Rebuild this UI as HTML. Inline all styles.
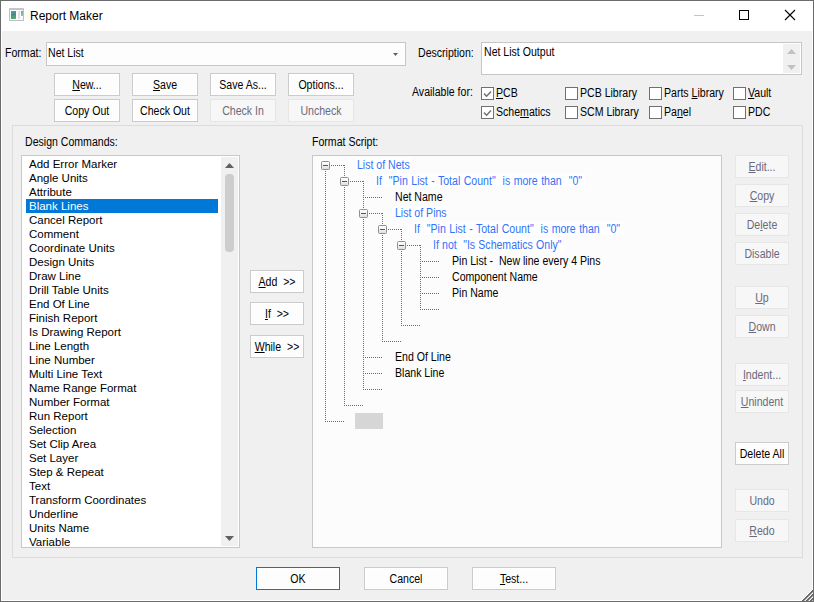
<!DOCTYPE html>
<html><head><meta charset="utf-8">
<style>
*{box-sizing:border-box;margin:0;padding:0}
html,body{width:814px;height:602px;overflow:hidden;background:#f0f0f0}
body{position:relative;font-family:"Liberation Sans",sans-serif;font-size:12px;color:#000}
.a{position:absolute}
.t{position:absolute;white-space:pre;font-size:12px;letter-spacing:0;line-height:14px;transform:scaleX(0.88);transform-origin:0 0}
.frame{left:0;top:0;width:814px;height:602px;border:1px solid #6b6b6b}
.inner{left:1px;top:31px;width:812px;height:570px;border-left:1px solid #fff;border-right:1px solid #fff;border-bottom:1px solid #fff}
.title{left:1px;top:1px;width:812px;height:30px;background:#fff}
.btn{position:absolute;background:#fdfdfd;border:1px solid #cbcbcb;box-shadow:inset 0 0 0 1px #fff;font-size:12px;letter-spacing:0;text-align:center;white-space:pre;color:#000}
.btn.dis{background:#f7f7f7;border-color:#e6e6e6;box-shadow:none;color:#6a6a7c}
.btn span{position:absolute;left:-20px;right:-20px;text-align:center;transform:scaleX(0.88)}
u{text-decoration:underline;text-underline-offset:1px}
.cb{position:absolute;width:13px;height:13px;border:1px solid #707070;background:#fff}
.lst{position:absolute;font-size:11.5px;letter-spacing:0px;white-space:pre;left:29px;line-height:14px}
.dot{position:absolute}
</style></head><body>
<div class="a title"></div>
<div class="a frame"></div>
<div class="a inner"></div>

<!-- title icon -->
<div class="a" style="left:9px;top:8px;width:15px;height:13px;border:1px solid #bcc0c6;border-top:2px solid #c2c6cc;background:#fafafa;border-radius:1px"></div>
<div class="a" style="left:11px;top:11px;width:5px;height:8px;background:linear-gradient(160deg,#6f8fc6,#3f8f86 45%,#55b664)"></div>
<div class="a" style="left:18px;top:11px;width:2px;height:8px;background:#e2e2e2"></div>
<div class="a" style="left:21px;top:11px;width:2px;height:5px;background:linear-gradient(#7898cc,#8fd07a)"></div>
<div class="t" style="left:30px;top:9px;transform:none">Report Maker</div>
<div class="a" style="left:694px;top:15px;width:10px;height:1px;background:#c4c4c4"></div>
<div class="a" style="left:739px;top:10px;width:10px;height:10px;border:1px solid #000"></div>
<svg class="a" style="left:784px;top:9px" width="12" height="12" viewBox="0 0 12 12"><path d="M1 1L11 11M11 1L1 11" stroke="#000" stroke-width="1.1"/></svg>

<!-- format row -->
<div class="t" style="left:5px;top:46px">Format:</div>
<div class="a" style="left:46px;top:42px;width:360px;height:24px;border:1px solid #c6c6c6;background:#fdfdfd"></div>
<div class="t" style="left:48px;top:46px">Net List</div>
<svg class="a" style="left:393px;top:53px" width="5" height="3" viewBox="0 0 5 3"><path d="M0 0H5L2.5 3Z" fill="#606060"/></svg>

<div class="t" style="left:418px;top:46px">Description:</div>
<div class="a" style="left:481px;top:42px;width:321px;height:33px;border:1px solid #c6c6c6;background:#fff"></div>
<div class="t" style="left:484px;top:45px">Net List Output</div>
<div class="a" style="left:783px;top:44px;width:17px;height:29px;background:#f0f0f0"></div>
<svg class="a" style="left:787px;top:49px" width="9" height="5" viewBox="0 0 9 5"><path d="M0 5H9L4.5 0Z" fill="#c2c2c2"/></svg>
<svg class="a" style="left:787px;top:65px" width="9" height="5" viewBox="0 0 9 5"><path d="M0 0H9L4.5 5Z" fill="#c2c2c2"/></svg>

<!-- button rows -->
<div class="btn" style="left:54px;top:73px;width:66px;height:23px"><span style="top:4px"><u>N</u>ew...</span></div>
<div class="btn" style="left:132px;top:73px;width:66px;height:23px"><span style="top:4px"><u>S</u>ave</span></div>
<div class="btn" style="left:210px;top:73px;width:66px;height:23px"><span style="top:4px">Save As...</span></div>
<div class="btn" style="left:288px;top:73px;width:66px;height:23px"><span style="top:4px">Options...</span></div>
<div class="btn" style="left:54px;top:99px;width:66px;height:23px"><span style="top:4px">Copy Out</span></div>
<div class="btn" style="left:132px;top:99px;width:66px;height:23px"><span style="top:4px">Check Out</span></div>
<div class="btn dis" style="left:210px;top:99px;width:66px;height:23px"><span style="top:4px">Check In</span></div>
<div class="btn dis" style="left:288px;top:99px;width:66px;height:23px"><span style="top:4px">Uncheck</span></div>

<!-- available for -->
<div class="t" style="left:412px;top:85px">Available for:</div>
<div class="cb" style="left:481px;top:87px"></div>
<div class="cb" style="left:481px;top:106px"></div>
<div class="cb" style="left:565px;top:87px"></div>
<div class="cb" style="left:565px;top:106px"></div>
<div class="cb" style="left:649px;top:87px"></div>
<div class="cb" style="left:649px;top:106px"></div>
<div class="cb" style="left:733px;top:87px"></div>
<div class="cb" style="left:733px;top:106px"></div>
<svg class="a" style="left:481px;top:87px" width="13" height="13" viewBox="0 0 13 13"><path d="M3 6.6L5.6 9.2L10 4.4" stroke="#737373" stroke-width="1.5" fill="none"/></svg>
<svg class="a" style="left:481px;top:106px" width="13" height="13" viewBox="0 0 13 13"><path d="M3 6.6L5.6 9.2L10 4.4" stroke="#737373" stroke-width="1.5" fill="none"/></svg>
<div class="t" style="left:496px;top:86px"><u>P</u>CB</div>
<div class="t" style="left:496px;top:105px">Sche<u>m</u>atics</div>
<div class="t" style="left:580px;top:86px">PCB Library</div>
<div class="t" style="left:580px;top:105px">SCM Library</div>
<div class="t" style="left:664px;top:86px">Parts <u>L</u>ibrary</div>
<div class="t" style="left:664px;top:105px">Pa<u>n</u>el</div>
<div class="t" style="left:748px;top:86px"><u>V</u>ault</div>
<div class="t" style="left:748px;top:105px">PDC</div>

<!-- group -->
<div class="a" style="left:12px;top:125px;width:791px;height:433px;border:1px solid #dcdcdc"></div>
<div class="t" style="left:25px;top:135px">Design Commands:</div>
<div class="t" style="left:312px;top:135px">Format Script:</div>

<!-- list -->
<div class="a" style="left:21px;top:155px;width:219px;height:393px;border:1px solid #c8c8c8;background:#fff"></div>
<div class="a" style="left:221px;top:157px;width:17px;height:389px;background:#f0f0f0"></div>
<svg class="a" style="left:225px;top:163px" width="9" height="5" viewBox="0 0 9 5"><path d="M0 5H9L4.5 0Z" fill="#606060"/></svg>
<svg class="a" style="left:225px;top:536px" width="9" height="5" viewBox="0 0 9 5"><path d="M0 0H9L4.5 5Z" fill="#606060"/></svg>
<div class="a" style="left:225px;top:174px;width:9px;height:78px;background:#cdcdcd;border-radius:4px"></div>
<div class="a" style="left:26px;top:199px;width:192px;height:14px;background:#0078d7"></div>
<div id="items"></div>
<div class="lst" style="top:157px">Add Error Marker</div>
<div class="lst" style="top:171px">Angle Units</div>
<div class="lst" style="top:185px">Attribute</div>
<div class="lst" style="top:199px;color:#fff">Blank Lines</div>
<div class="lst" style="top:213px">Cancel Report</div>
<div class="lst" style="top:227px">Comment</div>
<div class="lst" style="top:241px">Coordinate Units</div>
<div class="lst" style="top:255px">Design Units</div>
<div class="lst" style="top:269px">Draw Line</div>
<div class="lst" style="top:283px">Drill Table Units</div>
<div class="lst" style="top:297px">End Of Line</div>
<div class="lst" style="top:311px">Finish Report</div>
<div class="lst" style="top:325px">Is Drawing Report</div>
<div class="lst" style="top:339px">Line Length</div>
<div class="lst" style="top:353px">Line Number</div>
<div class="lst" style="top:367px">Multi Line Text</div>
<div class="lst" style="top:381px">Name Range Format</div>
<div class="lst" style="top:395px">Number Format</div>
<div class="lst" style="top:409px">Run Report</div>
<div class="lst" style="top:423px">Selection</div>
<div class="lst" style="top:437px">Set Clip Area</div>
<div class="lst" style="top:451px">Set Layer</div>
<div class="lst" style="top:465px">Step &amp; Repeat</div>
<div class="lst" style="top:479px">Text</div>
<div class="lst" style="top:493px">Transform Coordinates</div>
<div class="lst" style="top:507px">Underline</div>
<div class="lst" style="top:521px">Units Name</div>
<div class="lst" style="top:535px;height:11px;overflow:hidden">Variable</div>

<!-- add/if/while -->
<div class="btn" style="left:250px;top:270px;width:54px;height:23px"><span style="top:4px"><u>A</u>dd  &gt;&gt;</span></div>
<div class="btn" style="left:250px;top:302px;width:54px;height:23px"><span style="top:4px"><u>I</u>f  &gt;&gt;</span></div>
<div class="btn" style="left:250px;top:335px;width:54px;height:23px"><span style="top:4px"><u>W</u>hile  &gt;&gt;</span></div>

<!-- tree -->
<div class="a" style="left:312px;top:155px;width:410px;height:393px;border:1px solid #c8c8c8;background:#fcfcfc"></div>
<!--TREE-->
<div class="a" style="left:356px;top:158px;width:55px;height:13px;background:#fff"></div><div class="a" style="left:375px;top:174px;width:210px;height:13px;background:#fff"></div><div class="a" style="left:394px;top:206px;width:54px;height:13px;background:#fff"></div><div class="a" style="left:413px;top:222px;width:210px;height:13px;background:#fff"></div><div class="a" style="left:432px;top:238px;width:131px;height:13px;background:#fff"></div>
<svg class="a" style="left:0;top:0" width="814" height="602">
<defs><linearGradient id="bg" x1="0" y1="0" x2="0" y2="1"><stop offset="0" stop-color="#fff"/><stop offset="0.5" stop-color="#f2f2f2"/><stop offset="1" stop-color="#dcdcdc"/></linearGradient></defs>
<path d="M331 165.5H344M350 181.5H363M363 197.5H382M369 213.5H382M388 229.5H401M407 245.5H420M420 261.5H439M420 277.5H439M420 293.5H439M420 309.5H439M401 325.5H420M382 341.5H401M363 357.5H382M363 373.5H382M363 389.5H382M344 405.5H363M325 421.5H344M325.5 171V422M344.5 165V176M344.5 187V406M363.5 181V208M363.5 219V390M382.5 213V224M382.5 235V342M401.5 229V240M401.5 251V326M420.5 245V310" stroke="#6a6a6a" stroke-width="1" stroke-dasharray="1 1" fill="none" shape-rendering="crispEdges"/>
<rect x="321.5" y="161.5" width="8" height="8" rx="1" fill="url(#bg)" stroke="#8f8f8f"/>
<rect x="323" y="165" width="5" height="1" fill="#3b55a5"/>
<rect x="340.5" y="177.5" width="8" height="8" rx="1" fill="url(#bg)" stroke="#8f8f8f"/>
<rect x="342" y="181" width="5" height="1" fill="#3b55a5"/>
<rect x="359.5" y="209.5" width="8" height="8" rx="1" fill="url(#bg)" stroke="#8f8f8f"/>
<rect x="361" y="213" width="5" height="1" fill="#3b55a5"/>
<rect x="378.5" y="225.5" width="8" height="8" rx="1" fill="url(#bg)" stroke="#8f8f8f"/>
<rect x="380" y="229" width="5" height="1" fill="#3b55a5"/>
<rect x="397.5" y="241.5" width="8" height="8" rx="1" fill="url(#bg)" stroke="#8f8f8f"/>
<rect x="399" y="245" width="5" height="1" fill="#3b55a5"/>
<rect x="355" y="413" width="28" height="16" fill="#d6d6d6"/>
</svg>
<div class="t" style="left:357px;top:158px;color:#3073fa">List of Nets</div>
<div class="t" style="left:376px;top:174px;color:#3073fa;word-spacing:0.6px">If  &quot;Pin List - Total Count&quot;  is more than  &quot;0&quot;</div>
<div class="t" style="left:395px;top:190px;color:#000">Net Name</div>
<div class="t" style="left:395px;top:206px;color:#3073fa">List of Pins</div>
<div class="t" style="left:414px;top:222px;color:#3073fa;word-spacing:0.6px">If  &quot;Pin List - Total Count&quot;  is more than  &quot;0&quot;</div>
<div class="t" style="left:433px;top:238px;color:#3073fa;word-spacing:0.3px">If not  &quot;Is Schematics Only&quot;</div>
<div class="t" style="left:452px;top:254px;color:#000">Pin List -  New line every 4 Pins</div>
<div class="t" style="left:452px;top:270px;color:#000">Component Name</div>
<div class="t" style="left:452px;top:286px;color:#000">Pin Name</div>
<div class="t" style="left:395px;top:350px;color:#000">End Of Line</div>
<div class="t" style="left:395px;top:366px;color:#000">Blank Line</div>
<!--/TREE-->

<!-- right buttons -->
<div class="btn dis" style="left:735px;top:155px;width:54px;height:23px"><span style="top:4px"><u>E</u>dit...</span></div>
<div class="btn dis" style="left:735px;top:184px;width:54px;height:23px"><span style="top:4px"><u>C</u>opy</span></div>
<div class="btn dis" style="left:735px;top:213px;width:54px;height:23px"><span style="top:4px">De<u>l</u>ete</span></div>
<div class="btn dis" style="left:735px;top:242px;width:54px;height:23px"><span style="top:4px">Disable</span></div>
<div class="btn dis" style="left:735px;top:286px;width:54px;height:23px"><span style="top:4px"><u>U</u>p</span></div>
<div class="btn dis" style="left:735px;top:315px;width:54px;height:23px"><span style="top:4px"><u>D</u>own</span></div>
<div class="btn dis" style="left:735px;top:363px;width:54px;height:23px"><span style="top:4px"><u>I</u>ndent...</span></div>
<div class="btn dis" style="left:735px;top:390px;width:54px;height:23px"><span style="top:4px"><u>U</u>nindent</span></div>
<div class="btn" style="left:735px;top:442px;width:54px;height:23px"><span style="top:4px">Delete All</span></div>
<div class="btn dis" style="left:735px;top:489px;width:54px;height:23px"><span style="top:4px">Undo</span></div>
<div class="btn dis" style="left:735px;top:519px;width:54px;height:23px"><span style="top:4px"><u>R</u>edo</span></div>

<!-- bottom -->
<div class="btn" style="left:256px;top:567px;width:84px;height:23px;border-color:#0078d7"><span style="top:4px">OK</span></div>
<div class="btn" style="left:364px;top:567px;width:84px;height:23px"><span style="top:4px">Cancel</span></div>
<div class="btn" style="left:472px;top:567px;width:84px;height:23px"><span style="top:4px"><u>T</u>est...</span></div>

<!-- size grip -->
<svg class="a" style="left:800px;top:588px" width="14" height="14" viewBox="0 0 14 14" shape-rendering="crispEdges"><path d="M1 12h1v1h-1zM2 11h1v1h-1zM3 10h1v1h-1zM4 9h1v1h-1zM5 8h1v1h-1zM6 7h1v1h-1zM7 6h1v1h-1zM8 5h1v1h-1zM9 4h1v1h-1zM10 3h1v1h-1zM11 2h1v1h-1zM12 1h1v1h-1z" fill="#fff"/><path d="M2 12h1v1h-1zM3 11h1v1h-1zM3 12h1v1h-1zM4 10h1v1h-1zM4 11h1v1h-1zM5 9h1v1h-1zM5 10h1v1h-1zM6 8h1v1h-1zM6 9h1v1h-1zM6 12h1v1h-1zM7 7h1v1h-1zM7 8h1v1h-1zM7 11h1v1h-1zM7 12h1v1h-1zM8 6h1v1h-1zM8 7h1v1h-1zM8 10h1v1h-1zM8 11h1v1h-1zM9 5h1v1h-1zM9 6h1v1h-1zM9 9h1v1h-1zM9 10h1v1h-1zM10 4h1v1h-1zM10 5h1v1h-1zM10 8h1v1h-1zM10 9h1v1h-1zM10 12h1v1h-1zM11 3h1v1h-1zM11 4h1v1h-1zM11 7h1v1h-1zM11 8h1v1h-1zM11 11h1v1h-1zM11 12h1v1h-1zM12 2h1v1h-1zM12 3h1v1h-1zM12 6h1v1h-1zM12 7h1v1h-1zM12 10h1v1h-1zM12 11h1v1h-1z" fill="#6b6b6b"/><path d="M4 12h1v1h-1zM5 11h1v1h-1zM6 10h1v1h-1zM7 9h1v1h-1zM8 8h1v1h-1zM8 12h1v1h-1zM9 7h1v1h-1zM9 11h1v1h-1zM10 6h1v1h-1zM10 10h1v1h-1zM11 5h1v1h-1zM11 9h1v1h-1zM12 4h1v1h-1zM12 8h1v1h-1z" fill="#b4b4b4"/><path d="M5 12h1v1h-1zM6 11h1v1h-1zM7 10h1v1h-1zM8 9h1v1h-1zM9 8h1v1h-1zM9 12h1v1h-1zM10 7h1v1h-1zM10 11h1v1h-1zM11 6h1v1h-1zM11 10h1v1h-1zM12 5h1v1h-1zM12 9h1v1h-1z" fill="#f4f4f4"/><path d="M12 12h1v1h-1z" fill="#c8c8c8"/></svg>
</body></html>
